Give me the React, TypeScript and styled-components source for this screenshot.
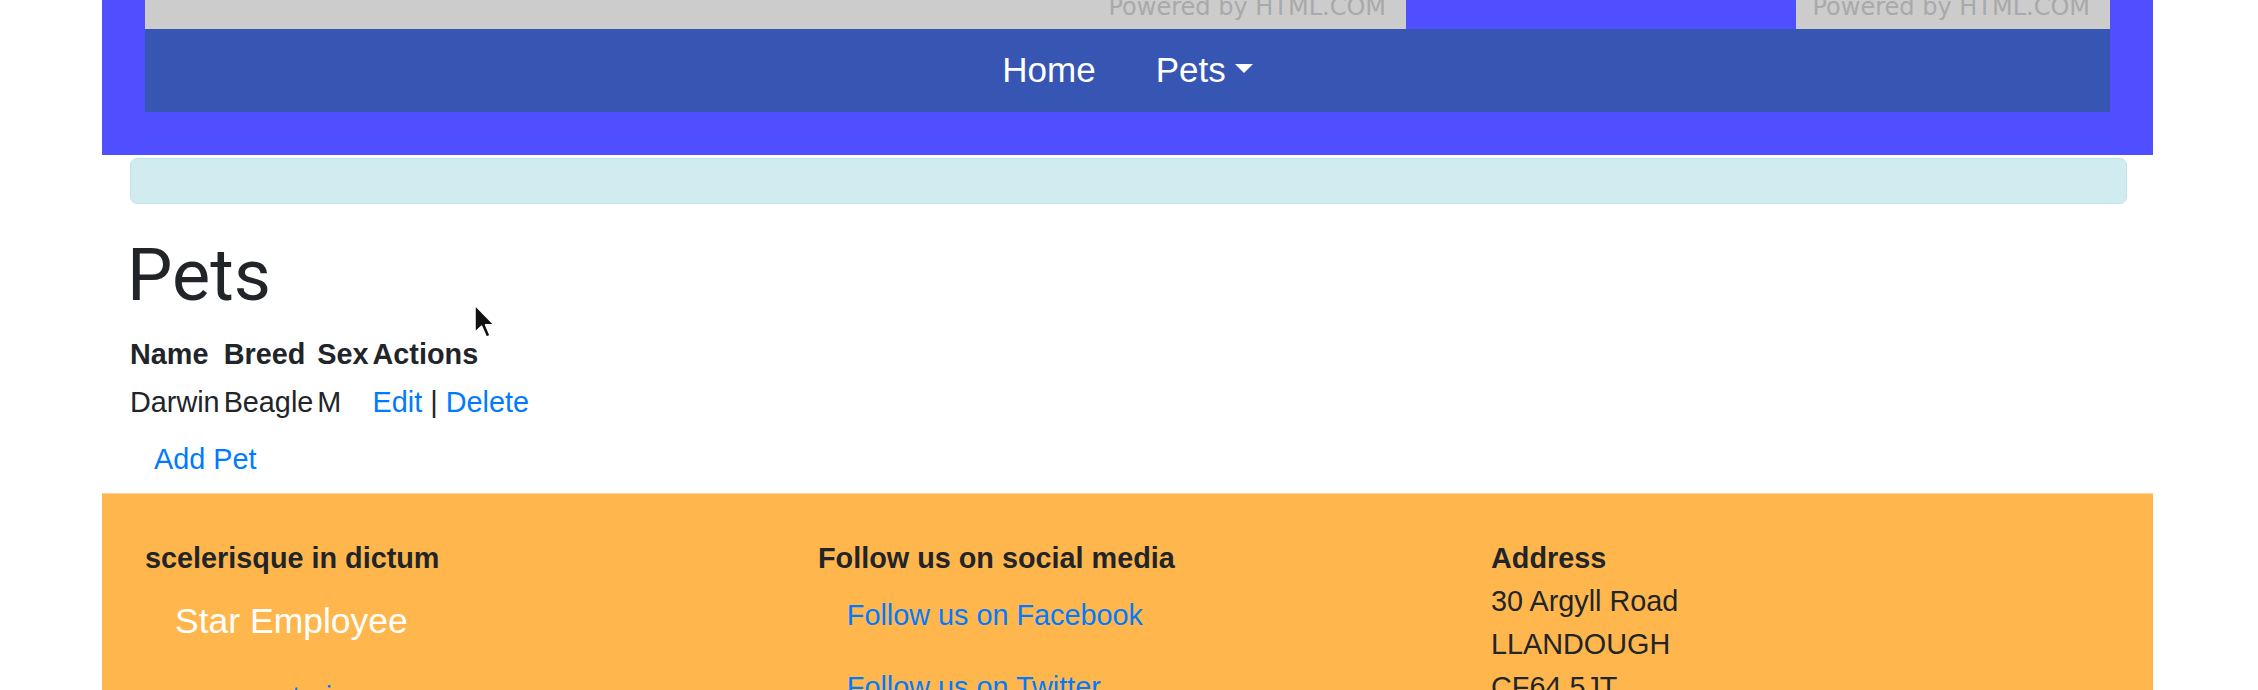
import React from "react";
import styled, { createGlobalStyle } from "styled-components";

const GlobalStyle = createGlobalStyle`
  html, body {
    margin: 0;
    padding: 0;
    background: #fff;
  }
  body {
    font-family: "Liberation Sans", Arial, sans-serif;
    font-size: 28.8px;
    line-height: 1.5;
    color: #212529;
  }
  * {
    box-sizing: border-box;
  }
`;

const App = () => {
  return (
    <Page>
      <GlobalStyle />
      <Header>
        <AdRow>
          <Ad $w={1261}>
            <AdText>Powered by HTML.COM</AdText>
          </Ad>
          <Ad $w={314}>
            <AdText>Powered by HTML.COM</AdText>
          </Ad>
        </AdRow>
        <NavBar>
          <NavLink href="#">Home</NavLink>
          <NavLink href="#">
            Pets
            <Caret />
          </NavLink>
        </NavBar>
      </Header>

      <Main>
        <Alert />
        <Title>Pets</Title>
        <Table>
          <thead>
            <tr>
              <HeadCell>Name</HeadCell>
              <HeadCell>Breed</HeadCell>
              <HeadCell>Sex</HeadCell>
              <HeadCell>Actions</HeadCell>
            </tr>
          </thead>
          <tbody>
            <tr>
              <Cell>Darwin</Cell>
              <Cell>Beagle</Cell>
              <Cell>M</Cell>
              <Cell>
                <TextLink href="#">Edit</TextLink> |{" "}
                <TextLink href="#">Delete</TextLink>
              </Cell>
            </tr>
          </tbody>
        </Table>
        <AddButton href="#">Add Pet</AddButton>
      </Main>

      <Footer>
        <FooterCol>
          <FooterHeading>scelerisque in dictum</FooterHeading>
          <Brand>Star Employee</Brand>
          <FooterLink href="#">see our stories</FooterLink>
        </FooterCol>
        <FooterCol>
          <FooterHeading>Follow us on social media</FooterHeading>
          <FooterLink href="#">Follow us on Facebook</FooterLink>
          <FooterLink href="#">Follow us on Twitter</FooterLink>
        </FooterCol>
        <FooterCol>
          <FooterHeading>Address</FooterHeading>
          <AddressLine>30 Argyll Road</AddressLine>
          <AddressLine>LLANDOUGH</AddressLine>
          <AddressLine>CF64 5JT</AddressLine>
        </FooterCol>
      </Footer>

      <Pointer viewBox="0 0 13 20">
        <path
          d="M1 1 L1 16 L4.6 12.6 L7.2 18.6 L9.4 17.6 L6.9 11.8 L11.6 11.8 Z"
          fill="#111"
          stroke="#fff"
          strokeWidth="1"
          strokeLinejoin="round"
        />
      </Pointer>
    </Page>
  );
};

export default App;

const Page = styled.div`
  position: relative;
  width: 2051px;
  margin-left: 102px;
`;

const Header = styled.header`
  background: #4f4fff;
  padding: 0 43px 43px;
  margin-bottom: 3px;
`;

const AdRow = styled.div`
  display: flex;
  justify-content: space-between;
  height: 29px;
`;

const Ad = styled.div<{ $w: number }>`
  width: ${(p) => p.$w}px;
  height: 29px;
  background: #cccccc;
  overflow: hidden;
  display: flex;
  justify-content: flex-end;
  align-items: flex-end;
  padding-right: 20px;
`;

const AdText = styled.span`
  font-family: "DejaVu Sans", sans-serif;
  font-size: 24px;
  line-height: 1;
  color: #a9a9a9;
  margin-bottom: 10px;
  white-space: nowrap;
`;

const NavBar = styled.nav`
  height: 83px;
  background: #3755b3;
  display: flex;
  justify-content: center;
  align-items: center;
`;

const NavLink = styled.a`
  font-size: 35px;
  line-height: 1.5;
  color: #fff;
  padding: 0 30px;
  text-decoration: none;
`;

const Caret = styled.span`
  display: inline-block;
  margin-left: 9px;
  vertical-align: 0.255em;
  border-top: 9px solid #fff;
  border-left: 9.5px solid transparent;
  border-right: 9.5px solid transparent;
`;

const Main = styled.main`
  padding: 0 26px 0 25px;
`;

const Alert = styled.div`
  margin: 0 0 30px 3px;
  height: 46px;
  background: #d1ecf1;
  border: 1px solid #bee5eb;
  border-radius: 7px;
`;

const Title = styled.h1`
  margin: 0 0 11px;
  font-family: Roboto, "Liberation Sans", sans-serif;
  font-size: 72px;
  font-weight: 400;
  line-height: 84px;
`;

const Table = styled.table`
  border-spacing: 2px;
  font-size: 28.8px;
`;

const HeadCell = styled.th`
  padding: 1.5px 1px;
  text-align: left;
  font-weight: 700;
`;

const Cell = styled.td`
  padding: 1.5px 1px;
`;

const TextLink = styled.a`
  color: #007bff;
  text-decoration: none;
`;

const AddButton = styled.a`
  display: inline-block;
  padding: 10px 26px;
  border: 1px solid transparent;
  color: #007bff;
  text-decoration: none;
`;

const Footer = styled.footer`
  background: #ffb74d;
  border-top: 1px solid #ffd699;
  padding: 43px 16px 40px;
  display: grid;
  grid-template-columns: repeat(3, 1fr);
`;

const FooterCol = styled.div`
  padding: 0 27px;
`;

const FooterHeading = styled.div`
  font-weight: 700;
`;

const Brand = styled.div`
  margin: 6px 0 0 30px;
  padding: 9px 0 14px;
  font-size: 35.5px;
  line-height: 1.5;
  color: #fff;
`;

const FooterLink = styled.a`
  display: block;
  padding: 14.4px 28.8px;
  color: #007bff;
  text-decoration: none;
`;

const AddressLine = styled.div``;

const Pointer = styled.svg`
  position: absolute;
  left: 371px;
  top: 303px;
  width: 24px;
  height: 37px;
`;
